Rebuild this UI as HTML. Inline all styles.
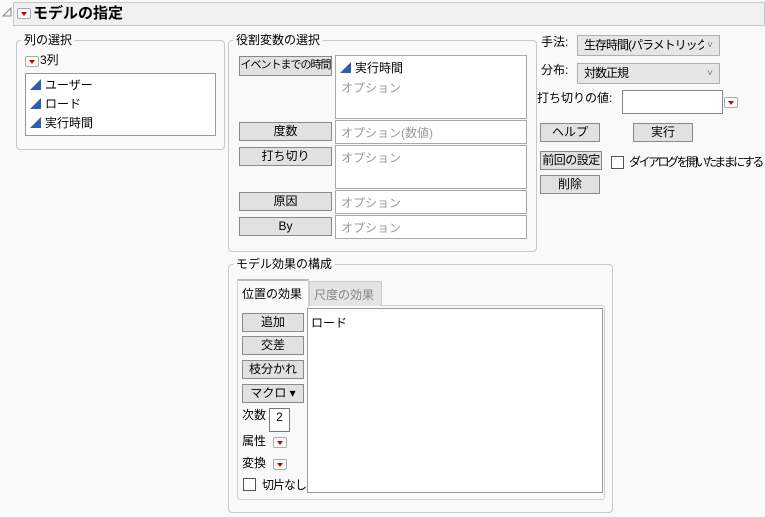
<!DOCTYPE html>
<html><head><meta charset="utf-8"><style>
*{box-sizing:border-box;margin:0;padding:0}
body{width:765px;height:517px;background:#f9f9f9;font-family:"Liberation Sans","Noto Sans CJK JP",sans-serif;font-size:12px;color:#000;position:relative;overflow:hidden;white-space:nowrap}
.a{position:absolute}
.grp{position:absolute;border:1px solid #c8c8c8;border-radius:4px}
.gl{position:absolute;background:#f9f9f9;padding:0 3px;top:-9px;left:4px;font-size:12px;line-height:16px}
.btn{position:absolute;background:#e1e1e1;border:1px solid #8a8a8a;text-align:center;font-size:12px;line-height:16px;overflow:hidden}
.box{position:absolute;background:#fff;border:1px solid #a8a8a8}
.ph{color:#999;position:absolute;left:5px}
.rb{position:absolute;width:14px;height:11px;border:1px solid #aaa;border-radius:2px;background:#fff}
.rb:after{content:"";position:absolute;left:3px;top:3px;border-left:3.5px solid transparent;border-right:3.5px solid transparent;border-top:4px solid #c00}
.tri{display:inline-block;width:0;height:0;border-left:11px solid transparent;border-bottom:11px solid #2e5fae;vertical-align:-1px;margin-right:4px}
.cb{position:absolute;width:13px;height:13px;border:1px solid #333;background:#fff}
.dd{position:absolute;background:#e6e6e6;border:1px solid #b0b0b0;padding-left:6px;line-height:19px;overflow:hidden;letter-spacing:-1px}
.dd:after{content:"˅";position:absolute;right:7px;top:0;color:#777;font-size:10px;background:#e6e6e6;padding-left:3px}
</style></head><body>
<svg class="a" style="left:2px;top:7px" width="10" height="10"><path d="M1 9 L9 1 L9 9 Z" fill="none" stroke="#888" stroke-width="1"/></svg>
<div class="a" style="left:13px;top:2px;width:752px;height:24px;background:#f0f0f0;border:1px solid #c8c8c8"></div>
<div class="rb" style="left:17px;top:8px"></div>
<div class="a" style="left:33px;top:4px;font-size:15px;font-weight:bold;line-height:20px">モデルの指定</div>

<div class="grp" style="left:16px;top:40px;width:209px;height:110px"><div class="gl">列の選択</div></div>
<div class="rb" style="left:25px;top:56px"></div>
<div class="a" style="left:40px;top:52px;line-height:16px">3列</div>
<div class="box" style="left:25px;top:73px;width:191px;height:63px;border-color:#999">
<div class="a" style="left:4px;top:2px;line-height:19px"><span class="tri"></span>ユーザー<br><span class="tri"></span>ロード<br><span class="tri"></span>実行時間</div></div>

<div class="grp" style="left:228px;top:40px;width:309px;height:212px"><div class="gl">役割変数の選択</div></div>
<div class="btn" style="left:239px;top:56px;width:93px;height:20px;font-size:11px;letter-spacing:-1px">イベントまでの時間</div>
<div class="btn" style="left:239px;top:122px;width:93px;height:19px">度数</div>
<div class="btn" style="left:239px;top:147px;width:93px;height:19px">打ち切り</div>
<div class="btn" style="left:239px;top:192px;width:93px;height:19px">原因</div>
<div class="btn" style="left:239px;top:217px;width:93px;height:19px">By</div>
<div class="box" style="left:335px;top:55px;width:192px;height:64px"><div class="a" style="left:4px;top:3px"><span class="tri"></span>実行時間</div><div class="ph" style="top:23px">オプション</div></div>
<div class="box" style="left:335px;top:120px;width:192px;height:24px"><div class="ph" style="top:3px">オプション(数値)</div></div>
<div class="box" style="left:335px;top:145px;width:192px;height:44px"><div class="ph" style="top:3px">オプション</div></div>
<div class="box" style="left:335px;top:190px;width:192px;height:24px"><div class="ph" style="top:3px">オプション</div></div>
<div class="box" style="left:335px;top:215px;width:192px;height:24px"><div class="ph" style="top:3px">オプション</div></div>

<div class="a" style="left:541px;top:34px;line-height:16px">手法:</div>
<div class="dd" style="left:577px;top:35px;width:143px;height:21px">生存時間(パラメトリック)</div>
<div class="a" style="left:541px;top:62px;line-height:16px">分布:</div>
<div class="dd" style="left:577px;top:63px;width:143px;height:21px">対数正規</div>
<div class="a" style="left:537px;top:90px;line-height:16px">打ち切りの値:</div>
<div class="box" style="left:622px;top:90px;width:101px;height:24px;border-color:#888"></div>
<div class="rb" style="left:724px;top:97px"></div>
<div class="btn" style="left:540px;top:123px;width:60px;height:19px">ヘルプ</div>
<div class="btn" style="left:633px;top:123px;width:60px;height:19px">実行</div>
<div class="btn" style="left:540px;top:151px;width:62px;height:19px;letter-spacing:-0.5px">前回の設定</div>
<div class="cb" style="left:611px;top:156px;border-color:#555"></div>
<div class="a" style="left:629px;top:154px;line-height:16px;letter-spacing:-2.5px">ダイアログを開いたままにする</div>
<div class="btn" style="left:540px;top:175px;width:60px;height:19px">削除</div>

<div class="grp" style="left:228px;top:264px;width:385px;height:249px"><div class="gl">モデル効果の構成</div></div>
<div class="a" style="left:237px;top:305px;width:368px;height:195px;border:1px solid #d0d0d0;border-radius:3px;background:#f9f9f9"></div>
<div class="a" style="left:309px;top:281px;width:73px;height:25px;background:#e4e4e4;border:1px solid #ccc;border-bottom:none;color:#888;padding:4px 0 0 4px">尺度の効果</div>
<div class="a" style="left:237px;top:279px;width:72px;height:28px;background:#f9f9f9;border:1px solid #d0d0d0;border-top:2px solid #bbb;border-bottom:none;padding:4px 0 0 4px">位置の効果</div>
<div class="box" style="left:307px;top:308px;width:296px;height:185px;border-color:#999"><div class="a" style="left:3px;top:5px">ロード</div></div>
<div class="btn" style="left:242px;top:313px;width:62px;height:19px">追加</div>
<div class="btn" style="left:242px;top:336px;width:62px;height:19px">交差</div>
<div class="btn" style="left:242px;top:360px;width:62px;height:19px">枝分かれ</div>
<div class="btn" style="left:242px;top:384px;width:62px;height:19px">マクロ ▾</div>
<div class="a" style="left:242px;top:407px;line-height:16px">次数</div>
<div class="box" style="left:269px;top:408px;width:21px;height:24px;border-color:#777;text-align:center;line-height:16px">2</div>
<div class="a" style="left:242px;top:433px;line-height:16px">属性</div>
<div class="rb" style="left:273px;top:437px"></div>
<div class="a" style="left:242px;top:455px;line-height:16px">変換</div>
<div class="rb" style="left:273px;top:459px"></div>
<div class="cb" style="left:243px;top:478px;border-color:#555"></div>
<div class="a" style="left:262px;top:477px;line-height:16px;letter-spacing:-1px">切片なし</div>
</body></html>
